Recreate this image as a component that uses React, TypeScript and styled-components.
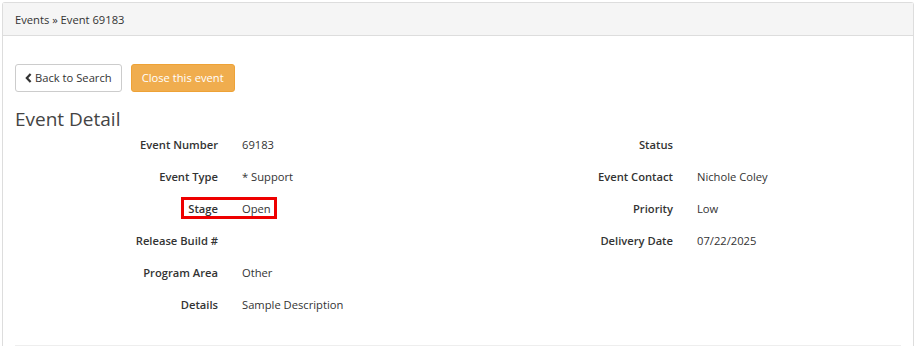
import React from "react";
import styled, { createGlobalStyle } from "styled-components";

const Global = createGlobalStyle`
  html, body { margin: 0; padding: 0; background: #fff; }
  body {
    font-family: "Open Sans", "Noto Sans", "Liberation Sans", sans-serif;
    font-size: 11.2px;
    color: #333;
  }
  * { box-sizing: border-box; }
`;

const Page = styled.div`
  padding: 2px 4px 0 2px;
`;

const Panel = styled.section`
  border: 1px solid #dddddd;
  border-bottom: none;
  border-radius: 3px 3px 0 0;
  background: #fff;
`;

const PanelHeading = styled.header`
  height: 33px;
  background: #f5f5f5;
  border-bottom: 1px solid #dddddd;
  padding: 0 12px;
  display: flex;
  align-items: center;
  color: #333;
`;

const PanelBody = styled.div`
  padding: 28px 12px 0 12px;
`;

const Toolbar = styled.div`
  display: flex;
  gap: 9px;
`;

const Button = styled.button<{ $variant?: "default" | "warning" }>`
  display: inline-flex;
  align-items: center;
  gap: 3px;
  height: 28px;
  padding: 0 ${(p) => (p.$variant === "warning" ? 10 : 9)}px;
  font-family: inherit;
  font-size: 11.2px;
  line-height: 16px;
  border-radius: 3px;
  border: 1px solid ${(p) => (p.$variant === "warning" ? "#eea236" : "#cccccc")};
  background: ${(p) => (p.$variant === "warning" ? "#f0ad4e" : "#ffffff")};
  color: ${(p) => (p.$variant === "warning" ? "#ffffff" : "#333333")};
  cursor: pointer;
`;

const Heading = styled.h3`
  margin: 17px 0 0 0;
  font-size: 19px;
  line-height: 20px;
  font-weight: 400;
  color: #444;
`;

const Columns = styled.div`
  display: grid;
  grid-template-columns: 1fr 1fr;
  column-gap: 24px;
  margin-top: -1px;
`;

const Column = styled.dl`
  margin: 0;
  display: grid;
  grid-template-columns: 203px 1fr;
  grid-auto-rows: 32px;
  column-gap: 24px;
  align-items: stretch;
`;

const Label = styled.dt`
  display: flex;
  align-items: center;
  justify-content: flex-end;
  font-weight: 600;
  color: #333;
  position: relative;
`;

const Value = styled.dd`
  margin: 0;
  display: flex;
  align-items: center;
  color: #333;
`;

const Highlight = styled.span`
  position: absolute;
  left: 166px;
  top: 5px;
  width: 96px;
  height: 22px;
  border: 3px solid #ee0000;
  pointer-events: none;
`;

const Divider = styled.hr`
  margin: 25px 0 0 0;
  border: none;
  border-top: 1px solid #eeeeee;
`;

const Chevron = () => (
  <svg width="7" height="10" viewBox="0 0 7 10" aria-hidden>
    <path d="M5.6 0.9 L1.8 5 L5.6 9.1" fill="none" stroke="#333" strokeWidth="2.2" />
  </svg>
);

const left: [string, string][] = [
  ["Event Number", "69183"],
  ["Event Type", "* Support"],
  ["Stage", "Open"],
  ["Release Build #", ""],
  ["Program Area", "Other"],
  ["Details", "Sample Description"],
];

const right: [string, string][] = [
  ["Status", ""],
  ["Event Contact", "Nichole Coley"],
  ["Priority", "Low"],
  ["Delivery Date", "07/22/2025"],
];

export default function App() {
  return (
    <>
      <Global />
      <Page>
        <Panel>
          <PanelHeading>Events » Event 69183</PanelHeading>
          <PanelBody>
            <Toolbar>
              <Button>
                <Chevron />
                Back to Search
              </Button>
              <Button $variant="warning">Close this event</Button>
            </Toolbar>
            <Heading>Event Detail</Heading>
            <Columns>
              <Column>
                {left.map(([k, v]) => (
                  <React.Fragment key={k}>
                    <Label>
                      {k}
                      {k === "Stage" && <Highlight />}
                    </Label>
                    <Value>{v}</Value>
                  </React.Fragment>
                ))}
              </Column>
              <Column>
                {right.map(([k, v]) => (
                  <React.Fragment key={k}>
                    <Label>{k}</Label>
                    <Value>{v}</Value>
                  </React.Fragment>
                ))}
              </Column>
            </Columns>
            <Divider />
          </PanelBody>
        </Panel>
      </Page>
    </>
  );
}
